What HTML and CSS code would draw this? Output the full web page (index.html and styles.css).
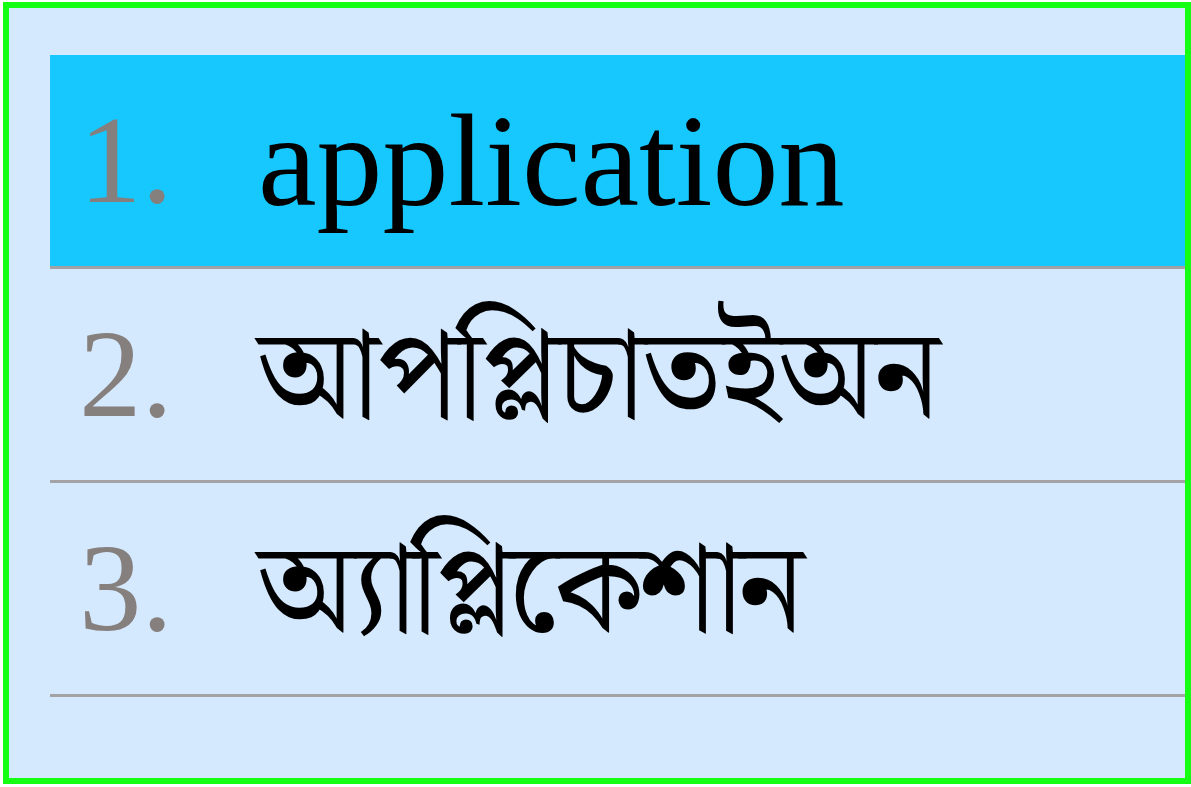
FILE: index.html
```html
<!DOCTYPE html>
<html lang="bn">
<head>
<meta charset="utf-8">
<title>Candidates</title>
<link rel="stylesheet" href="styles.css">
</head>
<body>
<div class="panel">
  <ol class="list">
    <li class="row active"><span class="num">1.</span><span class="word">application</span></li>
    <li class="row"><span class="num">2.</span><span class="word bn">আপপ্লিচাতইঅন</span></li>
    <li class="row"><span class="num">3.</span><span class="word bn narrow">অ্যাপ্লিকেশান</span></li>
  </ol>
</div>
</body>
</html>
```
FILE: styles.css
```css
html, body {
  margin: 0;
  padding: 0;
  background: #ffffff;
}
.panel {
  box-sizing: border-box;
  width: 1188px;
  height: 782px;
  margin: 2px 0 0 3px;
  border: 6px solid #14ff14;
  background: #d5e9fe;
  padding: 47px 0 0 41px;
}
.list {
  list-style: none;
  margin: 0;
  padding: 0;
}
.row {
  display: flex;
  height: 211px;
  line-height: 211px;
  border-bottom: 3px solid #a3a3a6;
  font-family: "Liberation Serif", "Noto Serif Bengali", "Noto Sans Bengali", "Lohit Bengali", serif;
  white-space: nowrap;
}
.row.active {
  background: #16c8fe;
}
.num {
  box-sizing: border-box;
  width: 208px;
  padding-left: 29px;
  font-size: 125px;
  color: #857f7e;
}
.word {
  font-size: 132px;
  color: #000;
}
.word.bn {
  font-size: 126px;
  letter-spacing: -1px;
}
.word.bn.narrow {
  letter-spacing: -5px;
}
```
